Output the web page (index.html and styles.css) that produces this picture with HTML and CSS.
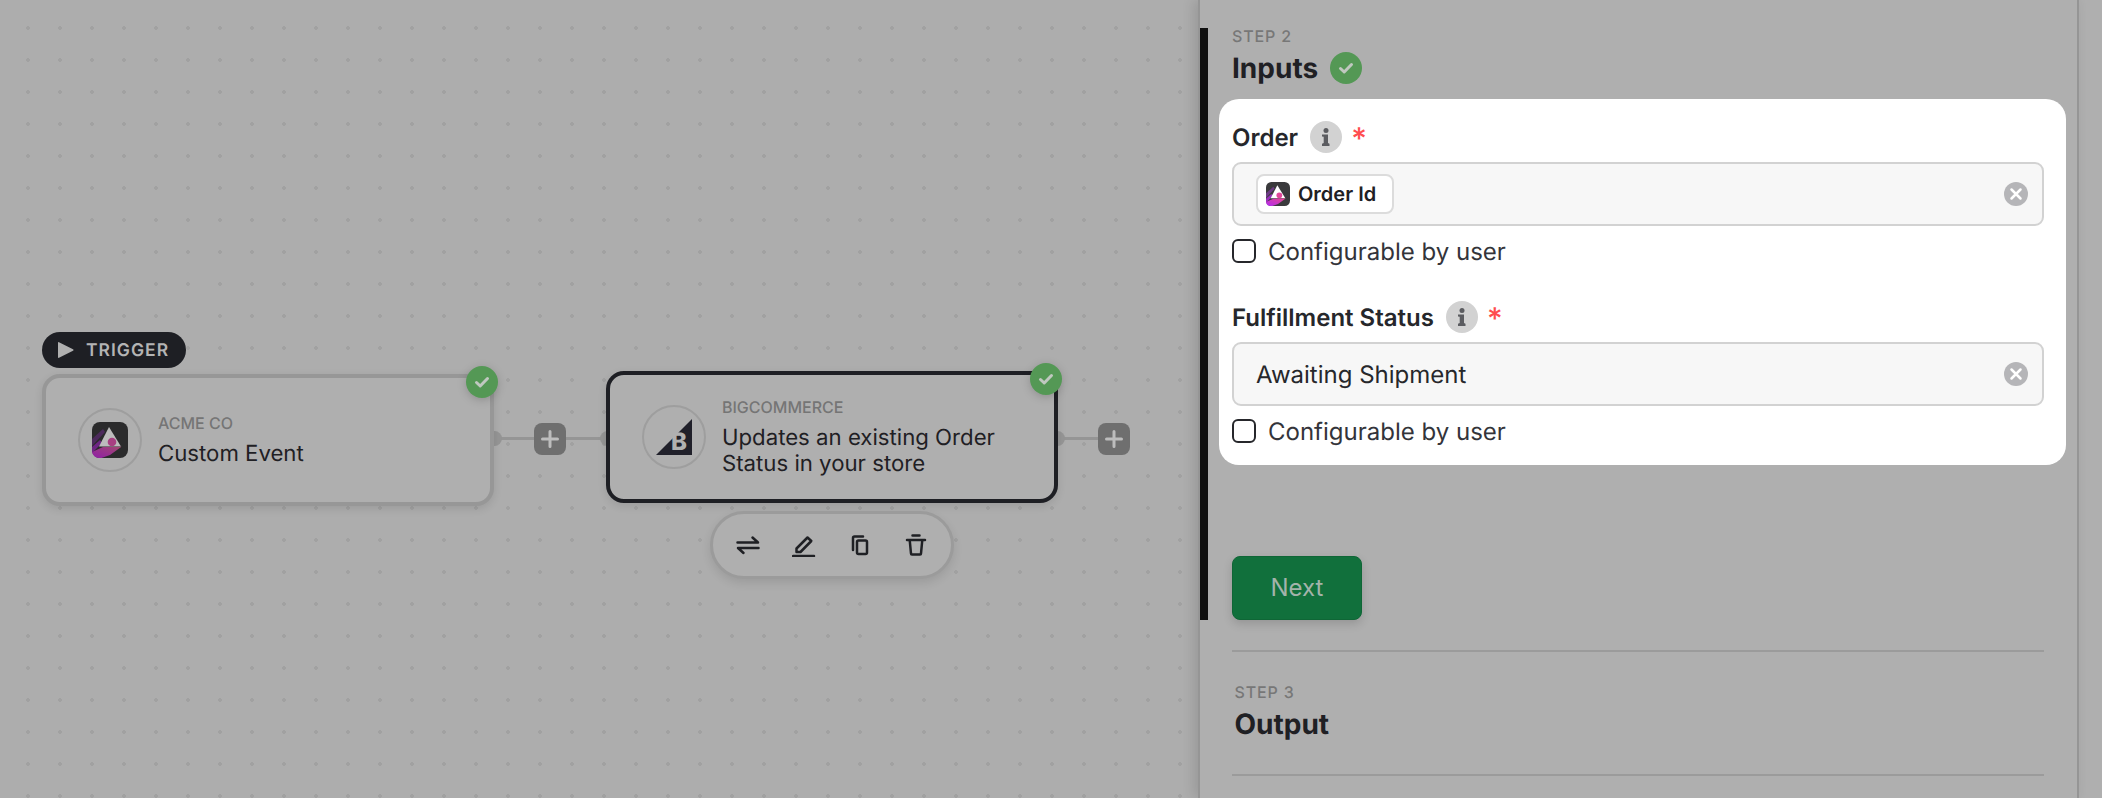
FILE: index.html
```html
<!DOCTYPE html>
<html lang="en">
<head>
<meta charset="utf-8">
<title>Flow builder</title>
<link rel="stylesheet" href="styles.css">
</head>
<body>
<div class="app">
  <main class="canvas">
    <div class="trigger-pill">
      <svg class="play" viewBox="0 0 16 18"><path d="M1 1.200 15 8.200a.9.9 0 0 1 0 1.600L1 16.800a.7.7 0 0 1-1-.6V1.800a.7.7 0 0 1 1-.6Z"/></svg>
      <span>TRIGGER</span>
    </div>

    <article class="node node-a">
      <div class="logo-ring">
        <svg class="acme" viewBox="0 0 36 36">
          <defs><linearGradient id="ga" x1="0" y1="1" x2="1" y2="0"><stop offset="0" stop-color="#8f1ea8"/><stop offset="1" stop-color="#a2486f"/></linearGradient></defs>
          <rect width="36" height="36" rx="8" fill="#2b2b2c"/>
          <path d="M0 17 11 7l2 3L0 24Z" fill="#4c2a5c"/>
          <path d="M0 25 8 18l2 3L0 31Z" fill="#6d2484"/>
          <path d="M17 5 29 24.500H7Z" fill="#bcbcbc"/>
          <path d="M0 30 11 25 29.500 24.700 18 33 9.500 36H7a7 7 0 0 1-7-6Z" fill="url(#ga)"/>
          <circle cx="20" cy="20" r="4.300" fill="#a83f82"/>
        </svg>
      </div>
      <div class="node-text">
        <div class="vendor">ACME CO</div>
        <div class="action">Custom Event</div>
      </div>
      <svg class="badge node-badge" viewBox="0 0 32 32"><circle cx="16" cy="16" r="16"/><path d="M10.500 16.500 14.200 20 21.500 12.500"/></svg>
    </article>

    <div class="conn conn-a"></div>
    <button class="plus plus-a"><svg viewBox="0 0 18 18"><path d="M9 1.500v15M1.500 9h15"/></svg></button>

    <article class="node node-b">
      <div class="logo-ring">
        <svg class="bc" viewBox="0 0 36 36">
          <path d="M36 0V36H0Z" fill="#20202a"/>
          <text x="15" y="31" class="bc-b">B</text>
        </svg>
      </div>
      <div class="node-text">
        <div class="vendor">BIGCOMMERCE</div>
        <div class="action">Updates an existing Order Status in your store</div>
      </div>
      <svg class="badge node-badge" viewBox="0 0 32 32"><circle cx="16" cy="16" r="16"/><path d="M10.500 16.500 14.200 20 21.500 12.500"/></svg>
    </article>

    <div class="conn conn-left"></div>
    <div class="conn conn-b"></div>
    <button class="plus plus-b"><svg viewBox="0 0 18 18"><path d="M9 1.500v15M1.500 9h15"/></svg></button>

    <div class="toolbar">
      <svg class="tool" viewBox="0 0 24 24"><path d="M1.500 9.500H22L16.500 4.500M22.500 15H2L7.500 20"/></svg>
      <svg class="tool" viewBox="0 0 24 24"><path d="M4.500 15.500 15.500 4.500l3.800 3.500L8.500 19H4.500Z"/><path d="M1 23H22"/></svg>
      <svg class="tool" viewBox="0 0 24 24"><rect x="9" y="7.500" width="10" height="13.500" rx="1.500"/><path d="M5 17V5A1.500 1.500 0 0 1 6.500 3.500H15"/></svg>
      <svg class="tool" viewBox="0 0 24 24"><path d="M3 7H21M8.500 2.500H15.500"/><path d="M5.800 8 7 20.500A1 1 0 0 0 8 21.500H16A1 1 0 0 0 17 20.500L18.200 8"/></svg>
    </div>
  </main>

  <aside class="panel">
    <section class="step-active">
      <div class="step-label">STEP 2</div>
      <h2 class="step-title">Inputs
        <svg class="badge" viewBox="0 0 32 32"><circle cx="16" cy="16" r="16"/><path d="M10.500 16.500 14.200 20 21.500 12.500"/></svg>
      </h2>

      <div class="card">
        <div class="field">
          <div class="field-label">
            <span>Order</span>
            <svg class="info" viewBox="0 0 32 32"><circle cx="16" cy="16" r="16"/><circle class="info-i" cx="16" cy="9.500" r="2.500"/><path class="info-i" d="M12 13.500h6v8.500l1.500.8V25H12v-2.200l1.700-.8v-6.300L12 15.500Z"/></svg>
            <span class="req">*</span>
          </div>
          <div class="input">
            <span class="chip">
              <svg class="acme-small" viewBox="0 0 36 36">
                <defs><linearGradient id="gb" x1="0" y1="1" x2="1" y2="0"><stop offset="0" stop-color="#b02cf0"/><stop offset="1" stop-color="#e8458f"/></linearGradient></defs>
                <rect width="36" height="36" rx="8" fill="#3a3a3c"/>
                <path d="M0 17 11 7l2 3L0 24Z" fill="#6d3c85"/>
                <path d="M0 25 8 18l2 3L0 31Z" fill="#9a30bd"/>
                <path d="M17 5 29 24.500H7Z" fill="#fff"/>
                <path d="M0 30 11 25 29.500 24.700 18 33 9.500 36H7a7 7 0 0 1-7-6Z" fill="url(#gb)"/>
                <circle cx="20" cy="20" r="4.300" fill="#e0479a"/>
              </svg>
              Order Id
            </span>
            <svg class="clear" viewBox="0 0 24 24"><circle cx="12" cy="12" r="12"/><path d="M7.500 7.500 16.500 16.500M16.500 7.500 7.500 16.500"/></svg>
          </div>
          <label class="check"><span class="box"></span>Configurable by user</label>
        </div>

        <div class="field">
          <div class="field-label">
            <span>Fulfillment Status</span>
            <svg class="info" viewBox="0 0 32 32"><circle cx="16" cy="16" r="16"/><circle class="info-i" cx="16" cy="9.500" r="2.500"/><path class="info-i" d="M12 13.500h6v8.500l1.500.8V25H12v-2.200l1.700-.8v-6.300L12 15.500Z"/></svg>
            <span class="req">*</span>
          </div>
          <div class="input">
            <span class="value">Awaiting Shipment</span>
            <svg class="clear" viewBox="0 0 24 24"><circle cx="12" cy="12" r="12"/><path d="M7.500 7.500 16.500 16.500M16.500 7.500 7.500 16.500"/></svg>
          </div>
          <label class="check"><span class="box"></span>Configurable by user</label>
        </div>
      </div>

      <button class="next">Next</button>
    </section>

    <section class="step-idle">
      <div class="step-label">STEP 3</div>
      <h2 class="step-title">Output</h2>
    </section>
  </aside>

  <div class="strip"></div>
</div>
</body>
</html>
```

FILE: styles.css
```css
* { box-sizing: border-box; }
html, body { margin: 0; height: 100%; overflow: hidden; }
body {
  font-family: Inter, "Liberation Sans", sans-serif; color: #1f2024; background: #afafaf;
  text-rendering: geometricPrecision;
}

.app { display: flex; height: 798px; width: 2102px; }

/* Diagram canvas */
.canvas {
  position: relative;
  isolation: isolate;
  flex: 0 0 1198px;
  background-color: #adadad;
  background-image: radial-gradient(circle at center, #a1a1a1 1.6px, transparent 2.2px);
  background-size: 32px 32px;
  background-position: 12px 12px;
}

.trigger-pill {
  position: absolute; left: 42px; top: 332px; width: 144px; height: 36px;
  display: flex; align-items: center; gap: 12px; padding-left: 16px;
  background: #1e1f24; color: #b4b4b4; border-radius: 18px;
  font-size: 17.500px; font-weight: 600; letter-spacing: 1px;
}
.play { width: 16px; height: 18px; fill: #b0b0b0; flex: none; }

.node {
  position: absolute; height: 132px; width: 452px;
  display: flex; align-items: center; gap: 16px; padding-left: 32px;
  background: #afafaf; border: 4px solid #979797; border-radius: 18px;
  box-shadow: 0 3px 8px rgba(0,0,0,.1);
}
.node-a { left: 42px; top: 374px; }
.node-b { left: 606px; top: 371px; border-color: #1e1f24; }

.logo-ring {
  flex: none; width: 64px; height: 64px; border: 2px solid #9e9e9e; border-radius: 50%;
  display: flex; align-items: center; justify-content: center;
}
.acme { width: 36px; height: 36px; }
.bc { width: 36px; height: 36px; }
.bc-b { font: 800 24px Inter, sans-serif; fill: #b0b0b0; }

.node-text { display: flex; flex-direction: column; gap: 8px; max-width: 320px; }
.vendor { font-size: 16px; line-height: 20px; font-weight: 500; color: #757575; }
.action { font-size: 22.200px; line-height: 26px; color: #1f2024; }

.badge { flex: none; width: 32px; height: 32px; }
.badge circle { fill: #549855; }
.badge path { fill: none; stroke: #c0c8c0; stroke-width: 3; stroke-linecap: round; stroke-linejoin: round; }
.node-badge { position: absolute; right: -8px; top: -12px; filter: drop-shadow(0 2px 4px rgba(0,0,0,.18)); }

.conn { position: absolute; z-index: -1; height: 3px; top: 437px; width: 42px; background: #959595; }
.conn::before {
  content: ""; position: absolute; top: -6px; width: 15px; height: 15px;
  border-radius: 50%; background: #959595;
}
.conn-a { left: 494px; }
.conn-a::before { left: -7px; }
.conn-b { left: 1057px; }
.conn-b::before { left: -7px; }
.conn-left { left: 566px; }
.conn-left::before { right: -7px; }

.plus {
  position: absolute; top: 423px; width: 32px; height: 32px; padding: 0; border: 0;
  background: #6f6f6f; border-radius: 8px;
  display: flex; align-items: center; justify-content: center;
}
.plus svg { width: 18px; height: 18px; fill: none; stroke: #bdbdbd; stroke-width: 3; stroke-linecap: round; }
.plus-a { left: 534px; }
.plus-b { left: 1098px; }

.toolbar {
  position: absolute; left: 710px; top: 511px; width: 244px; height: 68px;
  display: flex; align-items: center; gap: 32px; padding-left: 23px;
  background: #afafaf; border: 3px solid #9b9b9b; border-radius: 34px;
  box-shadow: 0 4px 10px rgba(0,0,0,.1);
}
.tool { flex: none; width: 24px; height: 24px; fill: none; stroke: #1f2024; stroke-width: 2.500; stroke-linecap: round; stroke-linejoin: round; }

/* Right panel */
.panel {
  flex: 0 0 881px; height: 798px; background: #afafaf;
  border-left: 2px solid #959595; border-right: 2px solid #959595;
  box-shadow: -4px 0 12px rgba(0,0,0,.12);
  position: relative; padding-top: 28px;
}
.strip { flex: 1; background: #afafaf; }

.step-active {
  border-left: 8px solid #111; padding-left: 24px; margin-right: 33px; height: 592px;
}
.step-label { font-size: 16px; line-height: 16px; letter-spacing: .85px; font-weight: 500; color: #777; }
.step-title {
  margin: 6px 0 0; height: 36px; display: flex; align-items: center; gap: 12px;
  font-size: 28px; font-weight: 700; color: #1f2024;
}

.card {
  margin: 13px -22px 0 -13px; padding: 22px 22px 22px 13px;
  background: #fff; border-radius: 20px;
  display: flex; flex-direction: column; gap: 38px;
}
.field-label {
  height: 32px; display: flex; align-items: center; gap: 12px;
  font-size: 24px; font-weight: 600; color: #26272b;
}
.info { width: 32px; height: 32px; flex: none; }
.info > circle:first-child { fill: #d2d2d2; }
.info-i { fill: #5b5c60; }
.req { color: #ff4d4f; font-size: 30px; line-height: 32px; font-weight: 500; margin-top: 4px; margin-left: -3px; }

.input {
  margin-top: 9px; height: 64px; display: flex; align-items: center; justify-content: space-between;
  padding: 0 14px 0 22px; background: #f7f7f7; border: 2px solid #d2d2d2; border-radius: 9px;
}
.chip {
  display: inline-flex; align-items: center; gap: 8px; height: 40px; width: 138px; padding-left: 8px;
  background: #fff; border: 2px solid #dcdcdc; border-radius: 8px;
  font-size: 20px; font-weight: 600; color: #1f2024;
}
.acme-small { width: 24px; height: 24px; flex: none; }
.value { font-size: 24px; color: #26272b; }
.clear { width: 24px; height: 24px; flex: none; }
.clear circle { fill: #b5b5b8; }
.clear path { stroke: #fff; stroke-width: 2.500; stroke-linecap: round; fill: none; }

.check {
  margin-top: 13px; height: 24px; display: flex; align-items: center; gap: 12px;
  font-size: 24px; color: #33343a;
}
.box { flex: none; width: 24px; height: 24px; border: 2px solid #26272b; border-radius: 6px; background: #fff; }

.next {
  display: block; margin-top: 91px; width: 130px; height: 64px; padding: 0 0 2px;
  background: #11703c; border: 1px solid #0f6636; border-radius: 8px;
  font: 400 24px Inter, sans-serif; color: #a3b3aa;
  box-shadow: 0 4px 10px rgba(0,0,0,.15);
}

.step-idle {
  margin: 30px 33px 0 32px; padding: 32px 0 32px 2.500px;
  border-top: 2px solid #9b9b9b; border-bottom: 2px solid #9b9b9b;
}
```
